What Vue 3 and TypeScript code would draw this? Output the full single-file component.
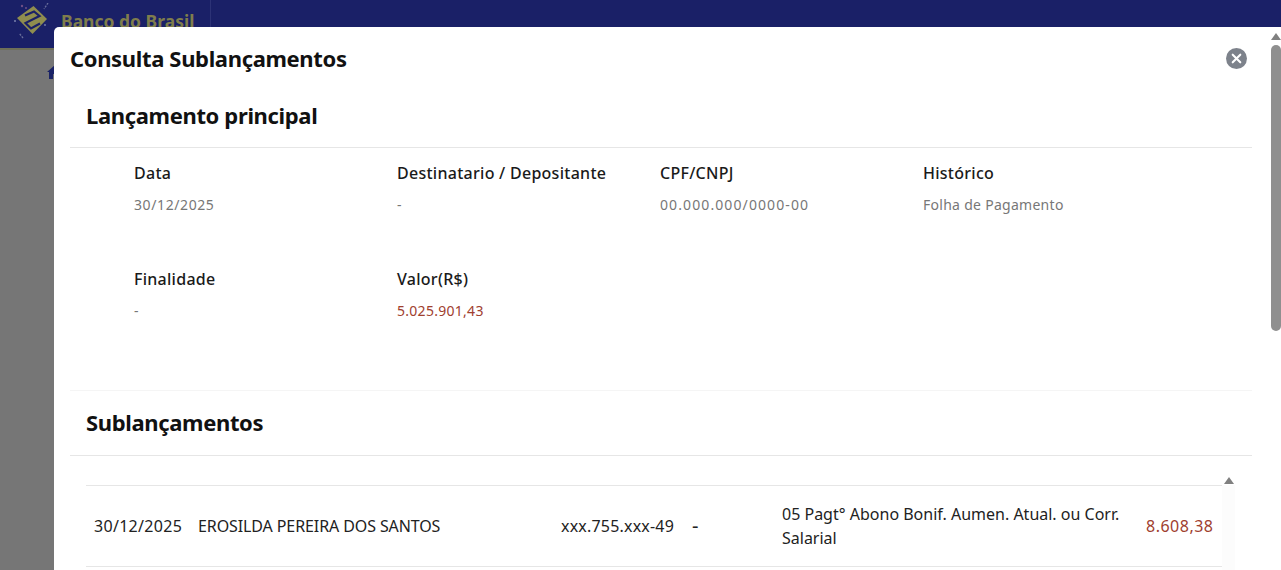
<template>
  <div class="page">
    <header class="topbar">
      <svg class="logo" width="36" height="36" viewBox="0 0 36 36" fill="none">
        <path d="M20.5 3 L34 16 L19.5 31 L4 15 Z" fill="#8f8d4f" />
        <path d="M12 12.5 L21 8.5 L26.5 13 L12.5 20 L18 25.5 L27 20.5" stroke="#1a2067" stroke-width="2.2" />
        <path d="M35 0 L31 6 M10 35 L6 30" stroke="#6a6f9c" stroke-width="1.3" stroke-dasharray="2 1.2" />
        <circle cx="9" cy="3" r="1.2" fill="#6f4f86" />
        <circle cx="13" cy="5" r="1" fill="#6f4f86" />
        <circle cx="2" cy="18" r="1" fill="#7a80ad" />
        <circle cx="32" cy="22" r=".9" fill="#7a80ad" />
      </svg>
      <span class="brand">Banco do Brasil</span>
      <span class="bar-sep"></span>
    </header>
    <div class="backdrop">
      <svg class="home" width="16" height="14" viewBox="0 0 16 14"><path d="M8 0 L16 7 H14 V14 H10 V9 H6 V14 H2 V7 H0 Z" fill="#1a2266" /></svg>
    </div>

    <section class="modal">
      <div class="modal-body">
        <div class="modal-head">
          <h1>Consulta Sublançamentos</h1>
          <button class="close" aria-label="Fechar">
            <svg width="21" height="21" viewBox="0 0 20 20">
              <circle cx="10" cy="10" r="10" fill="#7d828b" />
              <path d="M6.4 6.4 L13.6 13.6 M13.6 6.4 L6.4 13.6" stroke="#fff" stroke-width="2" stroke-linecap="round" />
            </svg>
          </button>
        </div>

        <div class="card">
          <h2 class="card-title">Lançamento principal</h2>
          <div class="fields">
            <div v-for="f in fields" :key="f.label" class="field">
              <div class="label">{{ f.label }}</div>
              <div class="value" :class="f.kind">{{ f.value }}</div>
            </div>
          </div>
        </div>

        <div class="card sub">
          <h2 class="card-title">Sublançamentos</h2>
          <div class="table-wrap">
            <div class="row">
              <span class="c-date">30/12/2025</span>
              <span class="c-name">EROSILDA PEREIRA DOS SANTOS</span>
              <span class="c-doc">xxx.755.xxx-49</span>
              <span class="c-dash">-</span>
              <span class="c-desc">05 Pagt° Abono Bonif. Aumen. Atual. ou Corr. Salarial</span>
              <span class="c-val">8.608,38</span>
            </div>
            <div class="inner-scroll">
              <i class="tri"></i>
              <div class="inner-track"></div>
            </div>
          </div>
        </div>
      </div>
      <div class="scrollbar">
        <i class="tri"></i>
        <div class="thumb"></div>
      </div>
    </section>
  </div>
</template>

<script setup lang="ts">
interface Field {
  label: string;
  value: string;
  kind?: 'date' | 'doc' | 'money';
}

const fields: Field[] = [
  { label: 'Data', value: '30/12/2025', kind: 'date' },
  { label: 'Destinatario / Depositante', value: '-' },
  { label: 'CPF/CNPJ', value: '00.000.000/0000-00', kind: 'doc' },
  { label: 'Histórico', value: 'Folha de Pagamento' },
  { label: 'Finalidade', value: '-' },
  { label: 'Valor(R$)', value: '5.025.901,43', kind: 'money' },
];
</script>

<style>
html, body { margin: 0; height: 100%; overflow: hidden; background: #767676; }
</style>

<style scoped>
.page {
  position: relative;
  height: 570px;
  overflow: hidden;
  font-family: "Noto Sans", "Open Sans", sans-serif;
  color: #111;
  background: #767676;
}

.topbar {
  height: 50px;
  background: #1a2067;
  border-bottom: 2px solid #6e6f58;
  display: flex;
  align-items: flex-start;
  padding-left: 13px;
  box-sizing: border-box;
}

.logo { margin-top: 3px; }

.brand {
  margin-left: 12px;
  margin-top: 9px;
  font-size: 17.5px;
  font-weight: 700;
  line-height: 24px;
  color: #7f7d4c;
}

.bar-sep {
  width: 1px;
  height: 27px;
  margin-left: 16px;
  background: #2c3276;
}

.backdrop { height: 520px; position: relative; }
.home { position: absolute; left: 47px; top: 15px; }

.modal {
  position: absolute;
  left: 54px;
  top: 27px;
  right: 0;
  bottom: 0;
  background: #fff;
  border-radius: 5px 0 0 0;
  display: flex;
  overflow: hidden;
}

.modal-body {
  flex: 1;
  padding: 0 16px;
  min-width: 0;
}

.modal-head {
  height: 56px;
  display: flex;
  align-items: center;
  justify-content: space-between;
  padding-top: 6px;
  box-sizing: border-box;
}

h1 {
  margin: 0;
  font-size: 22px;
  font-weight: 700;
  line-height: 30px;
  letter-spacing: -.35px;
}

.close {
  border: 0;
  padding: 0;
  background: none;
  display: flex;
  margin-right: 5px;
}

.card {
  height: 308px;
  box-sizing: border-box;
  border-bottom: 1px solid #f5f5f5;
}

.card-title {
  margin: 0;
  height: 65px;
  padding: 16px 16px 0;
  box-sizing: border-box;
  border-bottom: 1px solid #e6e6e6;
  font-size: 22px;
  font-weight: 700;
  line-height: 32px;
  letter-spacing: -.35px;
}

.sub .card-title { padding-top: 15px; }

.fields {
  display: grid;
  grid-template-columns: repeat(4, 263px);
  grid-auto-rows: 106px;
  padding: 13px 0 0 64px;
}

.label {
  font-size: 16px;
  font-weight: 500;
  line-height: 24px;
  letter-spacing: .27px;
  color: #1a1a1a;
}

.value {
  margin-top: 8px;
  font-size: 14px;
  line-height: 24px;
  letter-spacing: .28px;
  color: #777;
}

.value.date { letter-spacing: .6px; }
.value.doc { letter-spacing: 1.1px; }
.value.money { color: #a0402f; }

.sub { height: auto; border: 0; }

.table-wrap {
  margin-top: 29px;
  padding-left: 16px;
  display: flex;
}

.row {
  width: 1136px;
  height: 82px;
  flex: none;
  box-sizing: border-box;
  border-top: 1px solid #e6e6e6;
  border-bottom: 1px solid #e6e6e6;
  display: grid;
  grid-template-columns: 104px 363px 131px 90px 364px 1fr;
  align-items: center;
  padding-left: 8px;
  font-size: 16px;
  line-height: 24px;
  color: #222;
}

.c-date { letter-spacing: .3px; }
.c-name { letter-spacing: -.1px; }
.c-doc { letter-spacing: .2px; }
.c-dash { font-size: 20px; }
.c-val { color: #a0402f; letter-spacing: .5px; }

.inner-scroll {
  width: 13px;
  margin-top: -8px;
  display: flex;
  flex-direction: column;
  align-items: center;
}

.inner-track {
  margin-top: 1px;
  width: 13px;
  height: 90px;
  background: #fcfcfc;
}

.scrollbar {
  width: 13px;
  flex: none;
  background: #fff;
  display: flex;
  flex-direction: column;
  align-items: center;
  padding: 6px 0 0 2px;
  box-sizing: border-box;
}

.tri {
  display: block;
  flex: none;
  width: 0;
  height: 0;
  border-left: 5px solid transparent;
  border-right: 5px solid transparent;
  border-bottom: 7px solid #808080;
}

.thumb {
  margin-top: 5px;
  width: 10px;
  height: 286px;
  border-radius: 5px;
  background: #8f8f8f;
}
</style>
